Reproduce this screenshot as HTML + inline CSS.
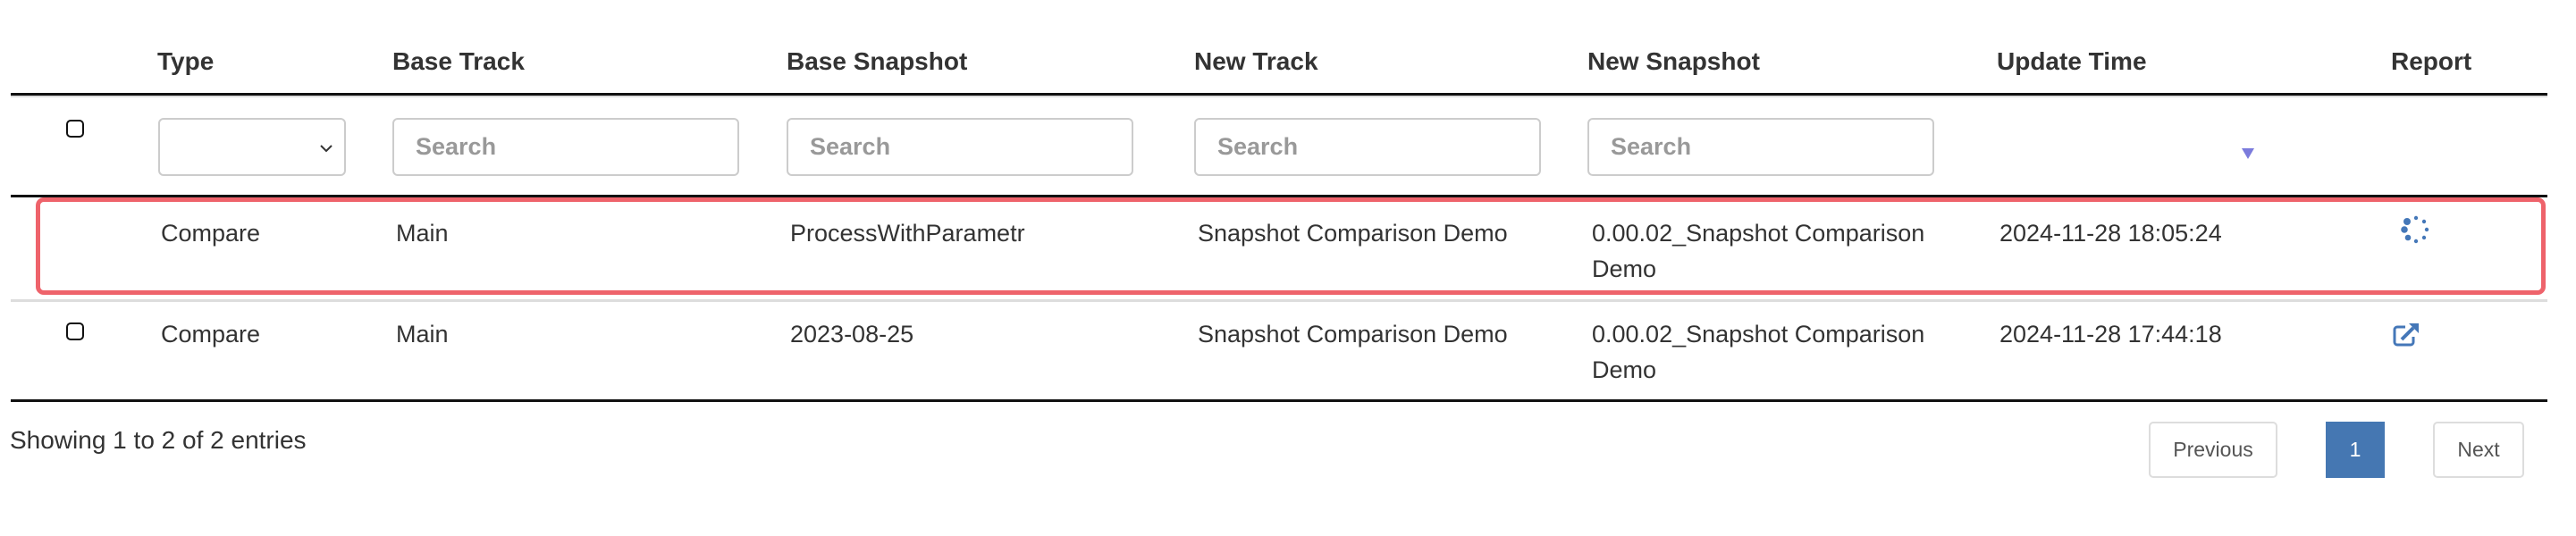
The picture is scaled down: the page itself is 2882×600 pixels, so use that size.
<!DOCTYPE html>
<html><head><meta charset="utf-8"><style>
body{margin:0;width:2882px;height:600px;background:#fff;font-family:"Liberation Sans",sans-serif;color:#333;position:relative;overflow:hidden}
.a{position:absolute;white-space:nowrap}
.h{font-weight:bold;font-size:28px;top:53px}
.d{font-size:27px;line-height:40px}
.in{position:absolute;top:132px;height:65px;border:2px solid #ccc;border-radius:6px;box-sizing:border-box;font-size:27px;font-weight:bold;color:#999;padding-left:24px;line-height:61px}
.cb{position:absolute;width:20px;height:20px;border:2px solid #111;border-radius:5px;box-sizing:border-box}
.ln{position:absolute;left:12px;width:2838px}
</style></head><body>
<div class="a h" style="left:176px">Type</div>
<div class="a h" style="left:439px">Base Track</div>
<div class="a h" style="left:880px">Base Snapshot</div>
<div class="a h" style="left:1336px">New Track</div>
<div class="a h" style="left:1776px">New Snapshot</div>
<div class="a h" style="left:2234px">Update Time</div>
<div class="a h" style="left:2675px">Report</div>
<div class="ln" style="top:104px;height:3px;background:#111"></div>
<div class="ln" style="top:107px;height:2px;background:#ddd"></div>

<div class="cb" style="left:74px;top:134px"></div>
<div class="in" style="left:177px;width:210px"><svg style="position:absolute;right:12px;top:27px" width="16" height="10" viewBox="0 0 16 10"><path d="M2 2l6 6 6-6" fill="none" stroke="#333" stroke-width="2"/></svg></div>
<div class="in" style="left:439px;width:388px">Search</div>
<div class="in" style="left:880px;width:388px">Search</div>
<div class="in" style="left:1336px;width:388px">Search</div>
<div class="in" style="left:1776px;width:388px">Search</div>
<svg class="a" style="left:2508px;top:165px" width="14" height="14" viewBox="0 0 14 14"><path d="M0 1h14L7 13z" fill="#7b7bdc"/></svg>
<div class="ln" style="top:218px;height:3px;background:#111"></div>

<div style="position:absolute;left:40px;top:221px;width:2808px;height:109px;border:5px solid #ee636b;border-radius:9px;box-sizing:border-box"></div>
<div class="a d" style="left:180px;top:241px">Compare</div>
<div class="a d" style="left:443px;top:241px">Main</div>
<div class="a d" style="left:884px;top:241px">ProcessWithParametr</div>
<div class="a d" style="left:1340px;top:241px">Snapshot Comparison Demo</div>
<div class="a d" style="left:1781px;top:241px">0.00.02_Snapshot Comparison<br>Demo</div>
<div class="a d" style="left:2237px;top:241px">2024-11-28 18:05:24</div>
<svg class="a" style="left:2683px;top:240px" width="36" height="36" viewBox="0 0 36 36" fill="#4477b8">
<circle cx="10" cy="8" r="4"/><circle cx="20" cy="4" r="2.2"/><circle cx="29" cy="8" r="2.2"/><circle cx="32" cy="17" r="2.2"/><circle cx="29" cy="26" r="2.2"/><circle cx="20" cy="30" r="2.2"/><circle cx="11" cy="26" r="3.3"/><circle cx="7" cy="17" r="3.8"/></svg>

<div class="ln" style="top:335px;height:3px;background:#ddd"></div>
<div class="cb" style="left:74px;top:361px"></div>
<div class="a d" style="left:180px;top:354px">Compare</div>
<div class="a d" style="left:443px;top:354px">Main</div>
<div class="a d" style="left:884px;top:354px">2023-08-25</div>
<div class="a d" style="left:1340px;top:354px">Snapshot Comparison Demo</div>
<div class="a d" style="left:1781px;top:354px">0.00.02_Snapshot Comparison<br>Demo</div>
<div class="a d" style="left:2237px;top:354px">2024-11-28 17:44:18</div>
<svg class="a" style="left:2677px;top:360px" width="32" height="28" viewBox="0 0 32 28"><path d="M14 6H5a3 3 0 0 0-3 3v14a3 3 0 0 0 3 3h15a3 3 0 0 0 3-3v-6" fill="none" stroke="#4477b8" stroke-width="3"/><path d="M10 20l13-13" stroke="#4477b8" stroke-width="4"/><path d="M18 2h11v11z" fill="#4477b8"/></svg>

<div class="ln" style="top:447px;height:3px;background:#111"></div>
<div class="a" style="left:11px;top:477px;font-size:28px">Showing 1 to 2 of 2 entries</div>
<div class="a" style="left:2404px;top:472px;width:144px;height:63px;border:2px solid #ddd;border-radius:5px;box-sizing:border-box;text-align:center;line-height:59px;font-size:23px;color:#555">Previous</div>
<div class="a" style="left:2602px;top:472px;width:66px;height:63px;background:#4577b2;color:#fff;text-align:center;line-height:63px;font-size:23px">1</div>
<div class="a" style="left:2722px;top:472px;width:102px;height:63px;border:2px solid #ddd;border-radius:5px;box-sizing:border-box;text-align:center;line-height:59px;font-size:23px;color:#555">Next</div>
</body></html>
